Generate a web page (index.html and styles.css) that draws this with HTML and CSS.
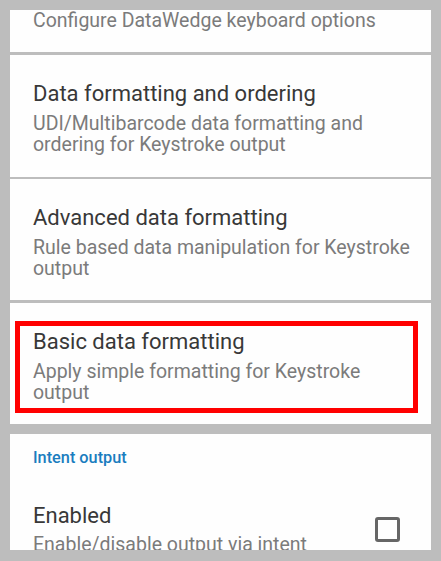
FILE: index.html
```html
<!DOCTYPE html>
<html>
<head>
<meta charset="utf-8">
<link rel="stylesheet" href="styles.css">
</head>
<body>
<div class="screen">
  <div class="list">
    <div class="card card-partial">
      <div class="summary">Configure DataWedge keyboard options</div>
    </div>
    <div class="card pref pref-tall gap3">
      <div class="title">Data formatting and ordering</div>
      <div class="summary">UDI/Multibarcode data formatting and ordering for Keystroke output</div>
    </div>
    <div class="card pref gap2">
      <div class="title">Advanced data formatting</div>
      <div class="summary">Rule based data manipulation for Keystroke output</div>
    </div>
    <div class="card pref gap3">
      <div class="title">Basic data formatting</div>
      <div class="summary">Apply simple formatting for Keystroke output</div>
      <div class="mark"></div>
    </div>
    <div class="card section">
      <div class="category">Intent output</div>
      <div class="row">
        <div class="row-text">
          <div class="title">Enabled</div>
          <div class="summary">Enable/disable output via intent</div>
        </div>
        <div class="checkbox"></div>
      </div>
    </div>
  </div>
</div>
</body>
</html>
```

FILE: styles.css
```css
html, body {
  margin: 0;
  padding: 0;
}
body {
  width: 441px;
  height: 561px;
  overflow: hidden;
  background: #bdbdbd;
  font-family: Roboto, "Noto Sans", sans-serif;
}
.screen {
  box-sizing: border-box;
  height: 561px;
  padding: 10px 10px 11px 10px;
}
.list {
  height: 540px;
  overflow: hidden;
  display: flex;
  flex-direction: column;
}
.card {
  background: #fefefe;
  padding: 0 14px 0 23px;
  flex-shrink: 0;
  position: relative;
}
.card-partial {
  padding-top: 0;
  padding-bottom: 21px;
}
.pref {
  padding-top: 25px;
  padding-bottom: 21px;
}
.pref-tall { padding-bottom: 22px; }
.gap3 { margin-top: 3px; }
.gap2 { margin-top: 2px; }
.section { margin-top: 10px; padding-top: 14px; }
.title {
  font-size: 22px;
  line-height: 28px;
  color: #383838;
}
.summary {
  font-size: 19.5px;
  line-height: 21px;
  color: #7b7b7b;
}
.pref .summary { margin-top: 5px; }
.category {
  font-size: 16.3px;
  line-height: 20px;
  font-weight: 500;
  color: #1a7dbf;
}
.row {
  display: flex;
  align-items: flex-start;
  margin-top: 34px;
}
.row-text { flex: 1; }
.row .summary { margin-top: 4px; }
.checkbox {
  box-sizing: border-box;
  width: 25px;
  height: 25px;
  border: 3px solid #666666;
  border-radius: 3px;
  margin-right: 17px;
  margin-top: 15px;
}
.mark {
  position: absolute;
  left: 5px;
  top: 18px;
  width: 403px;
  height: 92px;
  box-sizing: border-box;
  border: 5px solid #ff0000;
}
```
